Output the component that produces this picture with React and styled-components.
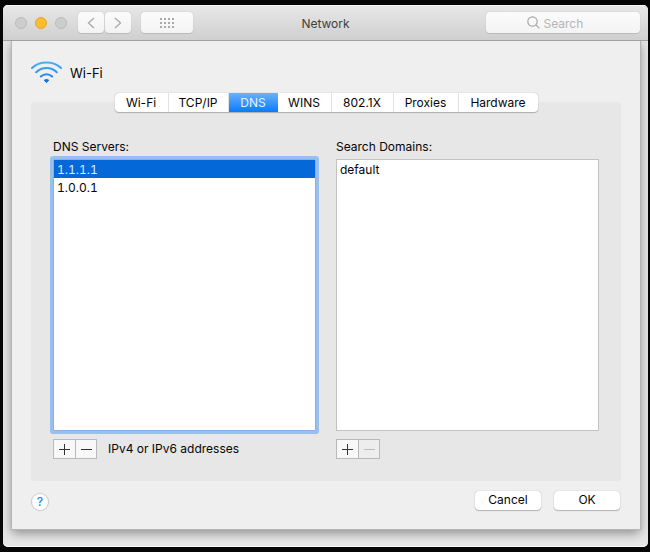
import { useState } from 'react'
import styled, { createGlobalStyle } from 'styled-components'

const GlobalStyle = createGlobalStyle`
    * {
        box-sizing: border-box;
    }

    body {
        margin: 0;
        background: #060606;
        color: #050505;
        font-family: Inter, "Liberation Sans", sans-serif;
        font-size: 12px;
        line-height: 16px;
    }

    button, input {
        font: inherit;
        color: inherit;
        padding: 0;
        margin: 0;
        outline: none;
    }
`

const Page = styled.div`
    padding: 5px 2px 5px 3px;
`

const Window = styled.main`
    background: #e6e6e6;
    border-radius: 5px;
    overflow: hidden;
    padding-bottom: 18px;
    box-shadow: inset 0 -1px 0 #fafafa;
`

const Toolbar = styled.header`
    display: grid;
    grid-template-columns: 1fr auto 1fr;
    align-items: center;
    height: 36px;
    background: linear-gradient(#e8e8e8, #cfcfcf);
    border-bottom: 1px solid #a0a0a0;
    box-shadow: inset 0 1px 0 #f8f8f8;
`

const ToolbarStart = styled.div`
    display: flex;
    align-items: center;
    padding-left: 12px;
`

const Lights = styled.div`
    display: flex;
    gap: 8px;
    margin-right: 10px;
`

const Light = styled.button`
    width: 12px;
    height: 12px;
    border-radius: 50%;
    border: 1px solid ${props => props.$active ? '#e5a52a' : '#bababa'};
    background: ${props => props.$active ? '#fdbc2e' : '#cdcdcd'};
`

const ToolButton = styled.button`
    display: flex;
    align-items: center;
    justify-content: center;
    width: ${props => props.$wide ? 52 : 26}px;
    height: 21px;
    margin-left: ${props => props.$wide ? 10 : 1}px;
    border: none;
    border-radius: 4px;
    background: linear-gradient(#fbfbfb, #f3f3f3);
    box-shadow: 0 0 1px 0 #aaa, 0 1px 0 #bcbcbc;
`

const Title = styled.h1`
    margin: 0;
    padding-top: 2px;
    font-size: 12px;
    font-weight: 400;
    color: #404040;
`

const SearchField = styled.label`
    justify-self: end;
    display: flex;
    align-items: center;
    justify-content: center;
    gap: 4px;
    width: 154px;
    height: 21px;
    margin-right: 8px;
    padding-right: 2px;
    border-radius: 4px;
    background: linear-gradient(#fbfbfb, #f4f4f4);
    box-shadow: 0 0 1px 0 #aaa, 0 1px 0 #bcbcbc;

    & input {
        width: 54px;
        height: 18px;
        padding-top: 1px;
        border: none;
        background: transparent;
    }

    & input::placeholder {
        color: #b5b5b5;
        opacity: 1;
    }
`

const Sheet = styled.section`
    margin: 0 8px 0 9px;
    padding: 19px;
    background: #efefef;
    box-shadow: 0 0 1px 1px #b5b5b5, 0 4px 10px rgba(0, 0, 0, 0.4);
    clip-path: inset(0 -20px -20px -20px);
`

const Service = styled.div`
    display: flex;
    align-items: center;
    gap: 8px;
    height: 25px;
    margin-bottom: 8px;

    & h2 {
        margin: 0;
        font-size: 13px;
        font-weight: 400;
    }
`

const Tabs = styled.div`
    position: relative;
    z-index: 1;
    display: grid;
    grid-template-columns: 54px 60px 49px 54px 62px 65px 79px;
    width: fit-content;
    height: 19px;
    margin: 0 auto -10px;
    border-radius: 4px;
    background: #fff;
    box-shadow: 0 0 1px #999, 0 1px 1px #b0b0b0;
`

const Tab = styled.button`
    border: none;
    border-right: ${props => props.$active ? 'none' : '1px solid #e2e2e2'};
    background: ${props => props.$active ? 'linear-gradient(#6bb1fb, #0a7bfe)' : 'transparent'};
    color: ${props => props.$active ? '#e8f2ff' : '#050505'};

    &:last-child {
        border-right: none;
    }
`

const Panel = styled.div`
    display: grid;
    grid-template-columns: 1fr 1fr;
    gap: 20px;
    padding: 37px 22px 22px;
    background: #e7e7e7;
    border-radius: 3px;
`

const ListLabel = styled.h3`
    margin: 0 0 4px;
    font-size: 12px;
    font-weight: 400;
`

const List = styled.ul`
    height: 272px;
    margin: 0 0 8px;
    padding: 0;
    list-style-type: none;
    font-variant-numeric: tabular-nums;
    background: #fff;
    border: 1px solid ${props => props.$focused ? '#84b1ea' : '#c2c2c2'};
    box-shadow: ${props => props.$focused ? '0 0 0 3px #97bff2' : 'none'};
    border-radius: ${props => props.$focused ? 1 : 0}px;
`

const Entry = styled.li`
    height: 18px;
    padding-left: 3px;
    line-height: 20px;
    background: ${props => props.$selected ? '#0568d9' : 'transparent'};
    color: ${props => props.$selected ? '#dcebff' : '#050505'};
`

const ListFooter = styled.div`
    display: flex;
    align-items: center;
    gap: 11px;
`

const EditButtons = styled.div`
    display: flex;
    border: 1px solid #b9b9b9;

    & button {
        display: flex;
        align-items: center;
        justify-content: center;
        width: 21px;
        height: 18px;
        border: none;
        background: #f8f8f8;
        color: #333;
    }

    & button + button {
        border-left: 1px solid #b9b9b9;
    }

    & button:disabled {
        background: #ededed;
        color: #bbb;
    }
`

const Actions = styled.div`
    display: flex;
    align-items: center;
    gap: 13px;
    margin-top: 9px;
    padding-right: 1px;
`

const HelpButton = styled.button`
    width: 16px;
    height: 16px;
    margin: 4px auto 0 1px;
    border: none;
    border-radius: 50%;
    background: #fff;
    color: #1a86fb;
    font-weight: 500;
    box-shadow: 0 0 1px 1px #c8c8c8;
`

const PushButton = styled.button`
    width: 66px;
    height: 19px;
    border: none;
    border-radius: 4px;
    background: #fff;
    box-shadow: 0 0 1px #999, 0 1px 1px #b8b8b8;
`

const WifiIcon = () => (
    <svg width="31" height="25" viewBox="0 0 31 25" fill="none" aria-hidden="true">
        <defs>
            <linearGradient id="wifi" gradientUnits="userSpaceOnUse" x1="0" y1="0" x2="0" y2="25">
                <stop offset="0" stopColor="#4db5f7" />
                <stop offset="1" stopColor="#0b72ee" />
            </linearGradient>
        </defs>
        <g stroke="url(#wifi)" strokeWidth="2" strokeLinecap="round">
            <path d="M1 8C8.500 0.600 22.500 0.600 30 8" />
            <path d="M5.200 12.300C11 6.700 20 6.700 25.800 12.300" />
            <path d="M9.800 16.500C13 13.500 18 13.500 21.200 16.500" />
        </g>
        <path d="M13.200 20.300C14 19.300 17 19.300 17.800 20.300L15.500 22.600Z" fill="#0b72ee" stroke="#0b72ee" strokeLinejoin="round" />
    </svg>
)

const Chevron = ({ d }) => (
    <svg width="8" height="12" viewBox="0 0 8 12" fill="none" stroke="#a9a9a9" strokeWidth="1.300" aria-hidden="true">
        <path d={d} />
    </svg>
)

const GridIcon = () => (
    <svg width="14" height="10" viewBox="0 0 14 10" fill="#aaa" aria-hidden="true">
        {[0, 4, 8].map(y => [0, 4, 8, 12].map(x => (
            <rect key={`${x}-${y}`} x={x} y={y} width="2" height="2" />
        )))}
    </svg>
)

const SearchIcon = () => (
    <svg width="13" height="13" viewBox="0 0 13 13" fill="none" stroke="#aaa" strokeWidth="1.200" aria-hidden="true">
        <circle cx="5.500" cy="5.500" r="4.700" />
        <path d="M9 9L12.400 12.400" />
    </svg>
)

const Sign = ({ plus }) => (
    <svg width="11" height="11" viewBox="0 0 11 11" stroke="currentColor" aria-hidden="true">
        <path d={plus ? 'M0 5.500H11M5.500 0V11' : 'M0 5.500H11'} />
    </svg>
)

const TABS = ['Wi-Fi', 'TCP/IP', 'DNS', 'WINS', '802.1X', 'Proxies', 'Hardware']

const EditableList = ({ id, label, items, hint, focused, selected, onSelect, removeDisabled }) => (
    <div>
        <ListLabel id={id}>{label}</ListLabel>
        <List role="listbox" aria-labelledby={id} $focused={focused}>
            {items.map(item => (
                <Entry
                    key={item}
                    role="option"
                    aria-selected={item === selected}
                    $selected={item === selected}
                    onClick={() => onSelect(item)}
                >
                    {item}
                </Entry>
            ))}
        </List>
        <ListFooter>
            <EditButtons>
                <button type="button" aria-label="Add"><Sign plus /></button>
                <button type="button" aria-label="Remove" disabled={removeDisabled}><Sign /></button>
            </EditButtons>
            {hint && <span>{hint}</span>}
        </ListFooter>
    </div>
)

const App = () => {
    const [tab, setTab] = useState('DNS')
    const [server, setServer] = useState('1.1.1.1')
    const [domain, setDomain] = useState(null)

    return <Page>
        <GlobalStyle />
        <Window>
            <Toolbar>
                <ToolbarStart>
                    <Lights>
                        <Light type="button" aria-label="Close" />
                        <Light type="button" aria-label="Minimize" $active />
                        <Light type="button" aria-label="Zoom" />
                    </Lights>
                    <ToolButton type="button" aria-label="Back"><Chevron d="M7 1L1.500 6L7 11" /></ToolButton>
                    <ToolButton type="button" aria-label="Forward"><Chevron d="M1 1L6.500 6L1 11" /></ToolButton>
                    <ToolButton type="button" aria-label="Show all" $wide><GridIcon /></ToolButton>
                </ToolbarStart>
                <Title>Network</Title>
                <SearchField>
                    <SearchIcon />
                    <input type="text" placeholder="Search" aria-label="Search" />
                </SearchField>
            </Toolbar>
            <Sheet>
                <Service>
                    <WifiIcon />
                    <h2>Wi-Fi</h2>
                </Service>
                <Tabs role="tablist">
                    {TABS.map(name => (
                        <Tab
                            key={name}
                            type="button"
                            role="tab"
                            aria-selected={name === tab}
                            $active={name === tab}
                            onClick={() => setTab(name)}
                        >
                            {name}
                        </Tab>
                    ))}
                </Tabs>
                <Panel>
                    <EditableList
                        id="servers"
                        label="DNS Servers:"
                        items={['1.1.1.1', '1.0.0.1']}
                        hint="IPv4 or IPv6 addresses"
                        selected={server}
                        onSelect={setServer}
                        focused
                    />
                    <EditableList
                        id="domains"
                        label="Search Domains:"
                        items={['default']}
                        selected={domain}
                        onSelect={setDomain}
                        removeDisabled={!domain}
                    />
                </Panel>
                <Actions>
                    <HelpButton type="button" aria-label="Help">?</HelpButton>
                    <PushButton type="button">Cancel</PushButton>
                    <PushButton type="button">OK</PushButton>
                </Actions>
            </Sheet>
        </Window>
    </Page>
}

export default App;
